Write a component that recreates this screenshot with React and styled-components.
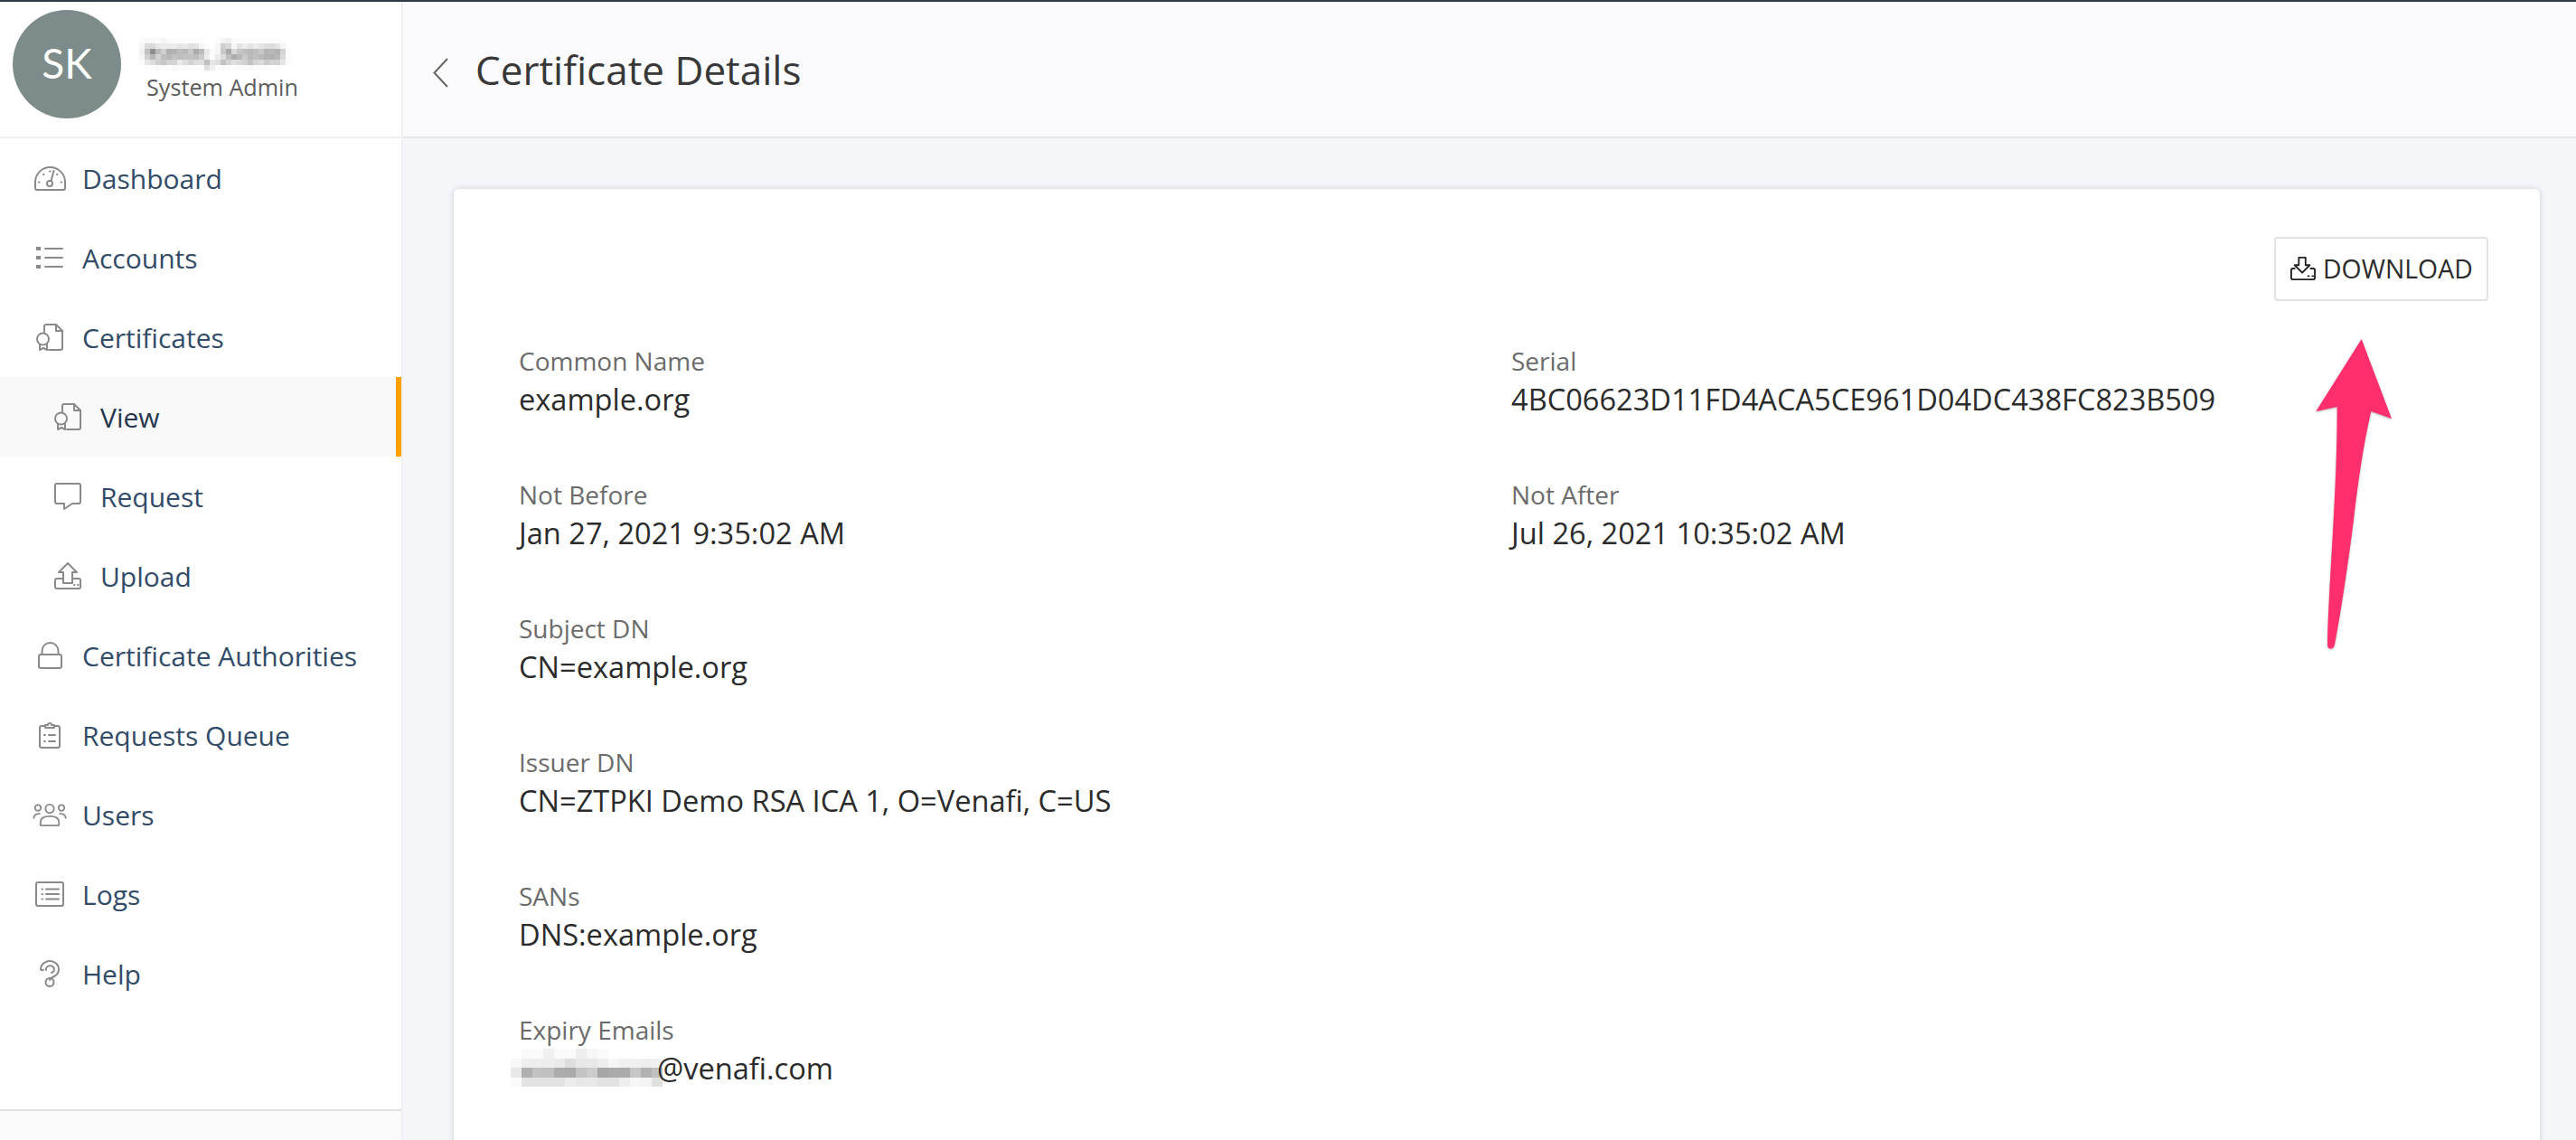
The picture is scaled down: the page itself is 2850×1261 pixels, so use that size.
import React from "react";
import styled, { createGlobalStyle } from "styled-components";

const GlobalStyle = createGlobalStyle`
  html, body { margin: 0; padding: 0; height: 100%; }
  body { font-family: "Open Sans", sans-serif; background: #f5f6fa; overflow: hidden; }
  * { box-sizing: border-box; }
`;

const Page = styled.div`
  display: flex;
  height: 1261px;
  border-top: 2px solid #2f3b47;
  overflow: hidden;
`;
const Sidebar = styled.aside`
  display: flex;
  flex-direction: column;
  flex: 0 0 446px;
  background: #fff;
  border-right: 2px solid #f0f0f2;
`;
const Profile = styled.div`
  display: flex;
  align-items: center;
  gap: 28px;
  height: 151px;
  padding: 0 0 11px 14px;
  border-bottom: 2px solid #f0f0f0;
`;
const Avatar = styled.div`
  display: flex;
  align-items: center;
  justify-content: center;
  width: 120px;
  height: 120px;
  padding-bottom: 3px;
  border-radius: 50%;
  background: #7d8c8a;
  color: #fff;
  font-family: Lato, sans-serif;
  font-size: 46px;
`;
const ProfileText = styled.div`
  display: flex;
  flex-direction: column;
  padding-top: 10px;
`;
const Role = styled.div`
  font-size: 25.2px;
  line-height: 30px;
  color: #5c5c5c;
  margin-top: 3px;
`;
const Nav = styled.nav`
  flex: 1;
  display: flex;
  flex-direction: column;
`;
const NavItem = styled.div`
  display: flex;
  align-items: center;
  height: 88px;
  padding-left: ${(p) => (p.$sub ? "55px" : "35px")};
  gap: 16px;
  font-size: 30px;
  color: ${(p) => (p.$active ? "#26364c" : "#324b68")};
  background: ${(p) => (p.$active ? "#f9f9f9" : "transparent")};
  border-right: ${(p) => (p.$active ? "6px solid #ffa000" : "0")};
`;
const IconBox = styled.span`
  display: flex;
  align-items: center;
  justify-content: center;
  width: 40px;
  height: 40px;
  flex: none;
  svg {
    display: block;
    fill: none;
    stroke: #8a8a8a;
    stroke-width: 2;
    stroke-linecap: round;
    stroke-linejoin: round;
  }
`;
const SideFooter = styled.div`
  flex: 0 0 34px;
  background: #fafafa;
  border-top: 2px solid #e2e2e4;
`;
const Main = styled.main`
  flex: 1;
  display: flex;
  flex-direction: column;
  min-width: 0;
`;
const Header = styled.header`
  display: flex;
  align-items: center;
  gap: 30px;
  flex: 0 0 151px;
  padding-left: 33px;
  background: #fbfbfd;
  border-bottom: 2px solid #e4e5e8;
`;
const BackChevron = styled.svg`
  margin-top: 8px;
  flex: none;
`;
const Title = styled.h1`
  margin: 0;
  font-size: 44px;
  font-weight: 400;
  color: #383838;
`;
const Content = styled.div`
  flex: 1;
  padding: 56px 40px 0 56px;
`;
const Card = styled.section`
  position: relative;
  height: 1100px;
  padding: 53px 57px 0 72px;
  background: #fff;
  border-radius: 6px;
  box-shadow: 0 0 6px rgba(40, 50, 70, 0.2);
`;
const Actions = styled.div`
  display: flex;
  justify-content: flex-end;
`;
const DownloadButton = styled.button`
  display: flex;
  align-items: center;
  gap: 8px;
  width: 237px;
  height: 71px;
  padding: 0 0 2px 16px;
  background: #fff;
  border: 2px solid #e2e2e2;
  border-radius: 4px;
  color: #2b2b2b;
  font-family: "Open Sans", sans-serif;
  font-size: 28.4px;
`;
const Details = styled.div`
  display: grid;
  grid-template-columns: 1098px 1fr;
  grid-auto-rows: 148px;
  margin-top: 46px;
`;
const Field = styled.div`
  grid-column: ${(p) => (p.$wide ? "1 / -1" : "auto")};
`;
const Label = styled.div`
  font-size: 28px;
  line-height: 40px;
  color: #6b6b6b;
`;
const Value = styled.div`
  display: flex;
  margin-top: 2px;
  font-size: 32.6px;
  line-height: 42px;
  color: #2b2b2b;
`;
const ArrowMark = styled.svg`
  position: absolute;
  left: 2048px;
  top: 141px;
  filter: drop-shadow(0 1px 1px rgba(0, 0, 0, 0.3));
`;
const NameMosaic = styled.svg`
  display: block;
  margin-left: -8px;
  shape-rendering: crispEdges;
`;
const EmailMosaic = styled.svg`
  display: block;
  margin: -1px -6px -6px -9px;
  shape-rendering: crispEdges;
`;

const CertIcon = () => (
  <svg width="30" height="30" viewBox="0 0 30 30">
    <path d="M9 9V3a2 2 0 0 1 2-2h11l7 7v19a2 2 0 0 1-2 2H14" />
    <path d="M22 1v7h7" />
    <circle cx="7.500" cy="17" r="6.500" />
    <path d="M4 23v6l4-2 4 2v-6" />
  </svg>
);

const icons = {
  dashboard: (
    <svg width="35" height="27" viewBox="0 0 35 27">
      <path d="M3 26a2 2 0 0 1-2-2v-6.500a16.500 16.500 0 0 1 33 0V24a2 2 0 0 1-2 2z" />
      <circle cx="17" cy="19" r="3" />
      <path d="M18.500 16l3-11M5 17.500h.5M10 9h.5M17 5.500h.5M25 9h.5M29.500 17.500h.5" />
    </svg>
  ),
  list: (
    <svg width="30" height="24" viewBox="0 0 30 24">
      <path d="M10 2h19M10 12h19M10 22h19" />
      <path strokeWidth="4" strokeLinecap="butt" d="M0 2h5M0 12h5M0 22h5" />
    </svg>
  ),
  cert: <CertIcon />,
  request: (
    <svg width="30" height="30" viewBox="0 0 30 30">
      <path d="M3 1h24a2 2 0 0 1 2 2v18a2 2 0 0 1-2 2h-7l-9 6v-6H3a2 2 0 0 1-2-2V3a2 2 0 0 1 2-2z" />
    </svg>
  ),
  upload: (
    <svg width="30" height="30" viewBox="0 0 30 30">
      <path d="M15 1L5 11h5v12h10V11h5z" />
      <path d="M10 18H3a2 2 0 0 0-2 2v7a2 2 0 0 0 2 2h24a2 2 0 0 0 2-2v-7a2 2 0 0 0-2-2h-7" />
      <path d="M22 25h.5M26 25h.5" />
    </svg>
  ),
  lock: (
    <svg width="27" height="30" viewBox="0 0 27 30">
      <path d="M3 14h21a2 2 0 0 1 2 2v11a2 2 0 0 1-2 2H3a2 2 0 0 1-2-2V16a2 2 0 0 1 2-2z" />
      <path d="M4.500 14V10a9 9 0 0 1 18 0v4" />
    </svg>
  ),
  clipboard: (
    <svg width="24" height="29" viewBox="0 0 24 29">
      <path d="M7 4H3a2 2 0 0 0-2 2v20a2 2 0 0 0 2 2h18a2 2 0 0 0 2-2V6a2 2 0 0 0-2-2h-4" />
      <path d="M7 6V3h3a2 2 0 0 1 4 0h3v3z" />
      <path d="M6 14h1M11 14h7M6 21h1M11 21h7" />
    </svg>
  ),
  users: (
    <svg width="38" height="26" viewBox="0 0 40 28">
      <circle cx="20" cy="7" r="5" />
      <circle cx="6" cy="6" r="3.500" />
      <circle cx="34" cy="6" r="3.500" />
      <path d="M10 27a1 1 0 0 1-1-1v-3c0-5 4-7 11-7s11 2 11 7v3a1 1 0 0 1-1 1z" />
      <path d="M1 18c0-3 2-5 7-5M39 18c0-3-2-5-7-5" />
    </svg>
  ),
  logs: (
    <svg width="32" height="28" viewBox="0 0 32 28">
      <rect x="1" y="1" width="30" height="26" rx="2" />
      <path d="M7.500 8.500h.5M7.500 14h.5M7.500 19.500h.5M12 8.500h14M12 14h14M12 19.500h14" />
    </svg>
  ),
  help: (
    <svg width="24" height="30" viewBox="0 0 24 30">
      <path d="M2 10a10 9 0 1 1 15 8c-3 1.500-5 2-5 4" />
      <path d="M2 10c0 1 2 2 3 .5M8 11a4.500 4 0 1 1 6 3" />
      <circle cx="12" cy="24.500" r="4.500" />
    </svg>
  ),
};

const navItems = [
  { label: "Dashboard", icon: "dashboard" },
  { label: "Accounts", icon: "list" },
  { label: "Certificates", icon: "cert" },
  { label: "View", icon: "cert", sub: true, active: true },
  { label: "Request", icon: "request", sub: true },
  { label: "Upload", icon: "upload", sub: true },
  { label: "Certificate Authorities", icon: "lock" },
  { label: "Requests Queue", icon: "clipboard" },
  { label: "Users", icon: "users" },
  { label: "Logs", icon: "logs" },
  { label: "Help", icon: "help" },
];

// pixelated (redacted) text, one grey value per cell
const nameShades = [
  [252, 248, 248, 250, 244, 250, 252, 252, 252, 252, 252, 252, 255, 255, 252, 244, 240, 250, 252, 252, 252, 252, 252, 252, 252, 252, 252, 255],
  [246, 220, 218, 232, 236, 234, 236, 230, 232, 224, 228, 246, 252, 255, 246, 208, 216, 246, 228, 236, 228, 236, 228, 222, 222, 230, 246, 255],
  [240, 192, 144, 186, 208, 176, 180, 190, 184, 200, 170, 188, 232, 250, 246, 200, 170, 216, 198, 190, 184, 190, 200, 180, 184, 178, 212, 252],
  [244, 208, 184, 210, 190, 184, 194, 190, 194, 194, 190, 204, 238, 252, 236, 220, 192, 172, 184, 202, 186, 192, 186, 180, 176, 184, 218, 252],
  [250, 230, 220, 206, 198, 210, 212, 234, 222, 210, 220, 222, 192, 230, 224, 194, 212, 222, 216, 210, 194, 212, 218, 202, 210, 210, 230, 250],
  [255, 252, 252, 250, 250, 252, 248, 250, 250, 252, 252, 252, 224, 240, 252, 250, 250, 252, 250, 250, 248, 250, 250, 250, 252, 252, 255, 255],
];
const emailShades = [
  [255, 250, 250, 240, 250, 250, 238, 246, 250, 255, 255, 255, 255, 255],
  [248, 238, 238, 238, 234, 222, 232, 232, 238, 246, 240, 240, 238, 240],
  [232, 176, 194, 192, 172, 170, 196, 204, 166, 170, 170, 198, 178, 192],
  [250, 226, 226, 226, 226, 236, 232, 232, 226, 226, 238, 246, 244, 224],
];

const Mosaic = ({ as: Wrap, shades, cell, height }) => {
  const rowH = height / shades.length;
  const width = shades[0].length * cell;
  return (
    <Wrap width={width} height={height} viewBox={`0 0 ${width} ${height}`}>
      {shades.map((row, y) =>
        row.map((v, x) => (
          <rect key={`${x}-${y}`} x={x * cell} y={y * rowH} width={cell} height={rowH} fill={`rgb(${v},${v},${v})`} />
        ))
      )}
    </Wrap>
  );
};

const fields = [
  { label: "Common Name", value: "example.org" },
  { label: "Serial", value: "4BC06623D11FD4ACA5CE961D04DC438FC823B509" },
  { label: "Not Before", value: "Jan 27, 2021 9:35:02 AM" },
  { label: "Not After", value: "Jul 26, 2021 10:35:02 AM" },
  { label: "Subject DN", value: "CN=example.org", wide: true },
  { label: "Issuer DN", value: "CN=ZTPKI Demo RSA ICA 1, O=Venafi, C=US", wide: true },
  { label: "SANs", value: "DNS:example.org", wide: true },
  { label: "Expiry Emails", value: "@venafi.com", wide: true, masked: true },
];

export default function App() {
  return (
    <Page>
      <GlobalStyle />
      <Sidebar>
        <Profile>
          <Avatar>SK</Avatar>
          <ProfileText>
            <Mosaic as={NameMosaic} shades={nameShades} cell={6} height={36} />
            <Role>System Admin</Role>
          </ProfileText>
        </Profile>
        <Nav>
          {navItems.map((item) => (
            <NavItem key={item.label} $sub={item.sub} $active={item.active}>
              <IconBox>{icons[item.icon]}</IconBox>
              {item.label}
            </NavItem>
          ))}
        </Nav>
        <SideFooter />
      </Sidebar>
      <Main>
        <Header>
          <BackChevron width="17" height="33" viewBox="0 0 17 33" fill="none" stroke="#666" strokeWidth="2">
            <path d="M16 1L1.500 16.500L16 32" />
          </BackChevron>
          <Title>Certificate Details</Title>
        </Header>
        <Content>
          <Card>
            <Actions>
              <DownloadButton>
                <svg width="28" height="28" viewBox="0 0 30 30" fill="none" stroke="#222" strokeWidth="2" strokeLinejoin="round" strokeLinecap="round">
                  <path d="M10 2h8v9h5l-9 9-9-9h5z" />
                  <path d="M5 15H3a2 2 0 0 0-2 2v9a2 2 0 0 0 2 2h24a2 2 0 0 0 2-2v-9a2 2 0 0 0-2-2h-3" />
                  <path d="M21 24h1M26 24h1" />
                </svg>
                DOWNLOAD
              </DownloadButton>
            </Actions>
            <Details>
              {fields.map((f) => (
                <Field key={f.label} $wide={f.wide}>
                  <Label>{f.label}</Label>
                  <Value>
                    {f.masked && <Mosaic as={EmailMosaic} shades={emailShades} cell={12} height={42} />}
                    {f.value}
                  </Value>
                </Field>
              ))}
            </Details>
            <ArrowMark width="110" height="380" viewBox="2550 350 110 380">
              <path
                fill="#ff2f6d"
                d="M2612.700 375L2646 463L2623.300 455C2614 495 2608 540 2604 575C2597 630 2590 675 2583 713C2582 719 2575 719 2575 713C2576 650 2586 540 2585.700 450L2562.300 455Z"
              />
            </ArrowMark>
          </Card>
        </Content>
      </Main>
    </Page>
  );
}
